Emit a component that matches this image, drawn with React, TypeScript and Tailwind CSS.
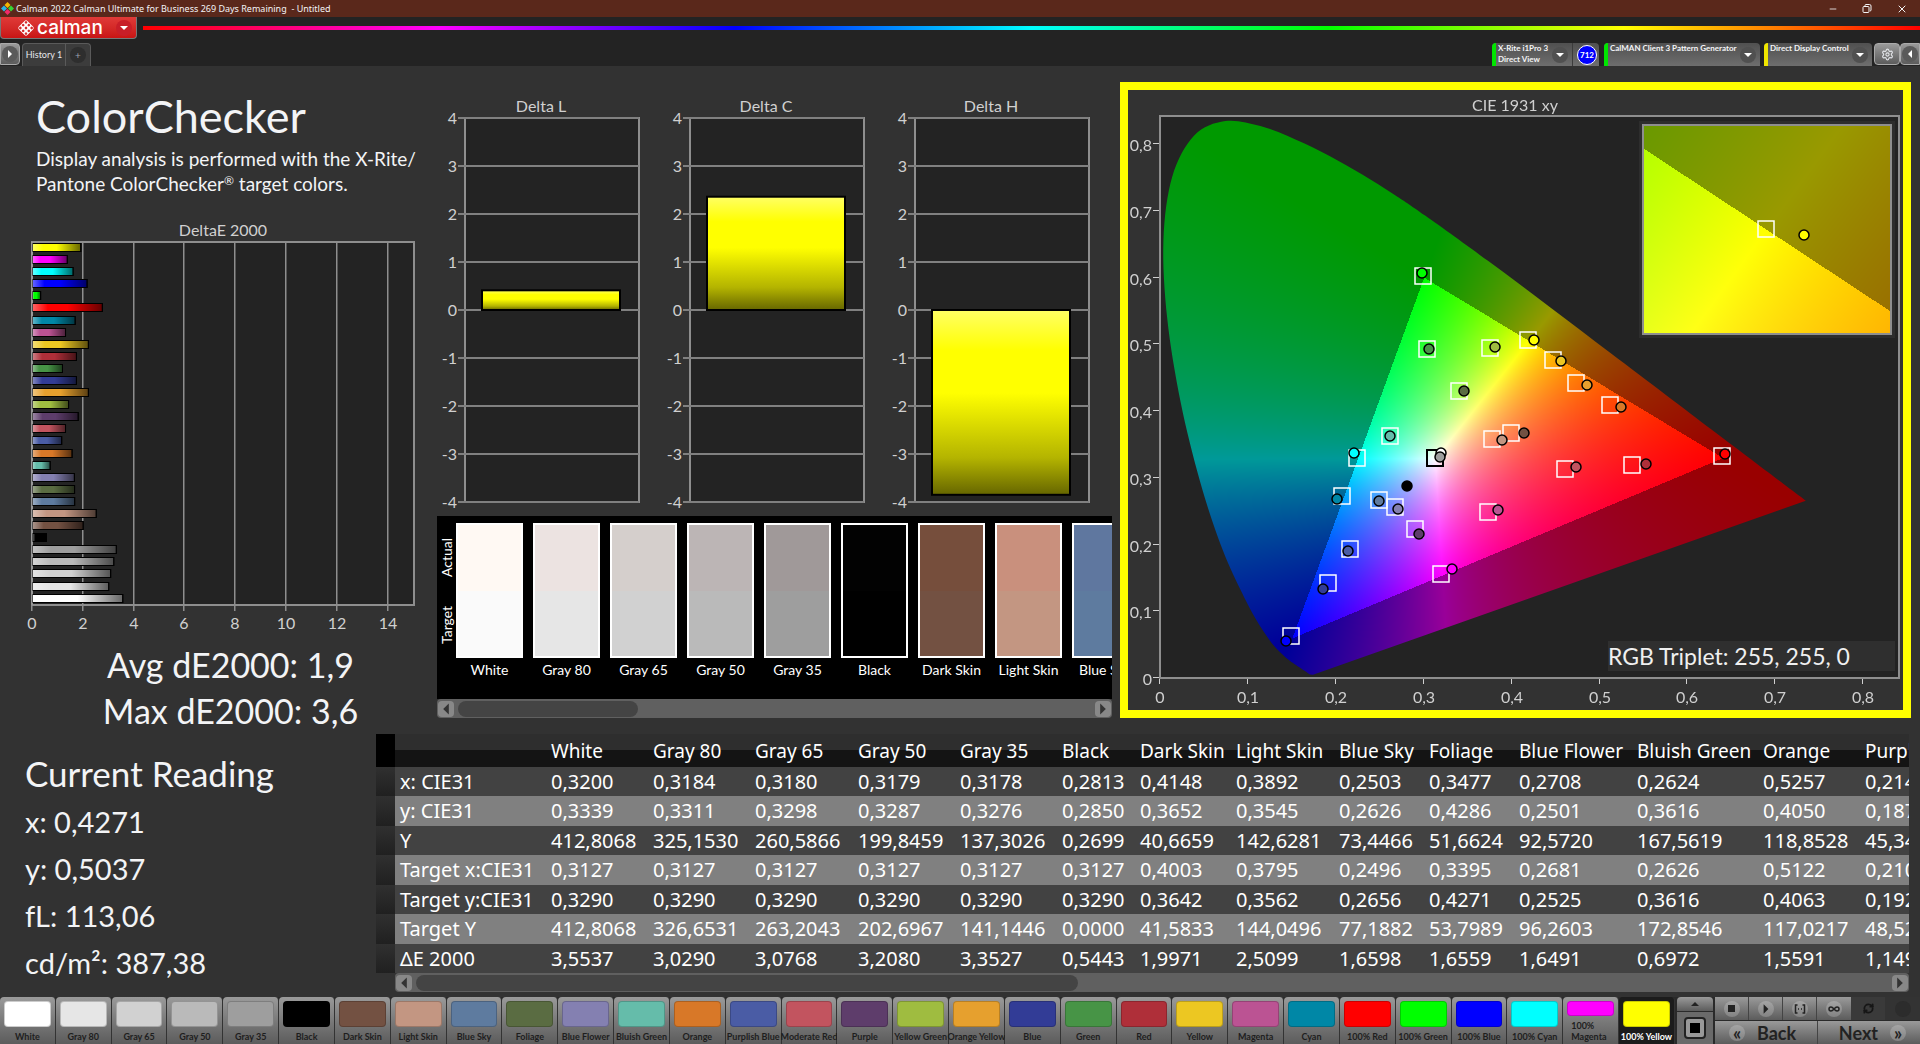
import React, { useEffect, useRef } from 'react';
import { Infinity as InfinityIcon, Minus, RefreshCw, Settings, X } from 'lucide-react';

interface Patch {
  name: string;
  target: string;
  actual?: string;
  dE: number;
}

interface Marker {
  x: number;
  y: number;
  fill: string;
}

const patches: Patch[] = [
  { name: 'White', target: '#ffffff', actual: '#fff9f3', dE: 3.5537 },
  { name: 'Gray 80', target: '#e6e6e6', actual: '#ece3e1', dE: 3.0 },
  { name: 'Gray 65', target: '#d1d1d1', actual: '#d5cfcc', dE: 3.0768 },
  { name: 'Gray 50', target: '#bababa', actual: '#bcb5b5', dE: 3.2 },
  { name: 'Gray 35', target: '#9e9e9e', actual: '#a09999', dE: 3.3 },
  { name: 'Black', target: '#000000', actual: '#020202', dE: 0.5443 },
  { name: 'Dark Skin', target: '#735142', actual: '#764e3c', dE: 1.9971 },
  { name: 'Light Skin', target: '#c39682', actual: '#c9907d', dE: 2.5099 },
  { name: 'Blue Sky', target: '#5e7b9f', actual: '#5f779f', dE: 1.6598 },
  { name: 'Foliage', target: '#5a6c42', dE: 1.6559 },
  { name: 'Blue Flower', target: '#8480b1', dE: 1.6491 },
  { name: 'Bluish Green', target: '#65bcaa', dE: 0.6972 },
  { name: 'Orange', target: '#d87828', dE: 1.5591 },
  { name: 'Purplish Blue', target: '#4a5ca5', dE: 1.149 },
  { name: 'Moderate Red', target: '#c2545f', dE: 1.3 },
  { name: 'Purple', target: '#5e3d6b', dE: 1.8 },
  { name: 'Yellow Green', target: '#9fbc40', dE: 1.42 },
  { name: 'Orange Yellow', target: '#e6a02e', dE: 2.2 },
  { name: 'Blue', target: '#323c96', dE: 1.73 },
  { name: 'Green', target: '#479446', dE: 1.18 },
  { name: 'Red', target: '#af2f39', dE: 1.73 },
  { name: 'Yellow', target: '#ecc722', dE: 2.2 },
  { name: 'Magenta', target: '#bb5393', dE: 1.3 },
  { name: 'Cyan', target: '#0087a6', dE: 1.68 },
  { name: '100% Red', target: '#ff0000', dE: 2.75 },
  { name: '100% Green', target: '#00ff00', dE: 0.32 },
  { name: '100% Blue', target: '#0000ff', dE: 2.15 },
  { name: '100% Cyan', target: '#00ffff', dE: 1.6 },
  { name: '100% Magenta', target: '#ff00ff', dE: 1.37 },
  { name: '100% Yellow', target: '#ffff00', dE: 1.9 },
];

const rows: { label: string; values: string[] }[] = [
  { label: 'x: CIE31', values: ['0,3200', '0,3184', '0,3180', '0,3179', '0,3178', '0,2813', '0,4148', '0,3892', '0,2503', '0,3477', '0,2708', '0,2624', '0,5257', '0,2142'] },
  { label: 'y: CIE31', values: ['0,3339', '0,3311', '0,3298', '0,3287', '0,3276', '0,2850', '0,3652', '0,3545', '0,2626', '0,4286', '0,2501', '0,3616', '0,4050', '0,1877'] },
  { label: 'Y', values: ['412,8068', '325,1530', '260,5866', '199,8459', '137,3026', '0,2699', '40,6659', '142,6281', '73,4466', '51,6624', '92,5720', '167,5619', '118,8528', '45,3442'] },
  { label: 'Target x:CIE31', values: ['0,3127', '0,3127', '0,3127', '0,3127', '0,3127', '0,3127', '0,4003', '0,3795', '0,2496', '0,3395', '0,2681', '0,2626', '0,5122', '0,2106'] },
  { label: 'Target y:CIE31', values: ['0,3290', '0,3290', '0,3290', '0,3290', '0,3290', '0,3290', '0,3642', '0,3562', '0,2656', '0,4271', '0,2525', '0,3616', '0,4063', '0,1922'] },
  { label: 'Target Y', values: ['412,8068', '326,6531', '263,2043', '202,6967', '141,1446', '0,0000', '41,5833', '144,0496', '77,1882', '53,7989', '96,2603', '172,8546', '117,0217', '48,5231'] },
  { label: 'ΔE 2000', values: ['3,5537', '3,0290', '3,0768', '3,2080', '3,3527', '0,5443', '1,9971', '2,5099', '1,6598', '1,6559', '1,6491', '0,6972', '1,5591', '1,1492'] },
];

const columnWidths = [19, 151, 102, 102, 103, 102, 102, 78, 96, 103, 90, 90, 118, 126, 102, 140];

// CIE 1931 spectral locus
const locus: [number, number][] = [
  [0.1741, 0.005], [0.1714, 0.0051], [0.1689, 0.0069], [0.1644, 0.0109], [0.1566, 0.0177], [0.151, 0.0227],
  [0.144, 0.0297], [0.1355, 0.0399], [0.1241, 0.0578], [0.1096, 0.0868], [0.0913, 0.1327], [0.0687, 0.2007],
  [0.0454, 0.295], [0.0235, 0.4127], [0.0082, 0.5384], [0.0039, 0.6548], [0.0139, 0.7502], [0.0389, 0.812],
  [0.0743, 0.8338], [0.1142, 0.8262], [0.1547, 0.8059], [0.1929, 0.7816], [0.2296, 0.7543], [0.2658, 0.7243],
  [0.3016, 0.6923], [0.3731, 0.6245], [0.4441, 0.5547], [0.5125, 0.4866], [0.5752, 0.4242], [0.627, 0.3725],
  [0.6658, 0.334], [0.6915, 0.3083], [0.719, 0.2809], [0.7347, 0.2653],
];

const targets: [number, number][] = [
  [263, 160], [267, 233], [330, 232], [299, 275], [230, 320], [197, 342], [182, 380], [219, 384], [235, 391],
  [255, 413], [190, 433], [168, 467], [131, 520], [281, 458], [328, 396], [332, 323], [351, 317], [368, 224],
  [393, 244], [416, 267], [450, 289], [405, 353], [472, 349], [562, 340],
];

const measured: Marker[] = [
  { x: 262, y: 157, fill: '#00ff00' }, { x: 269, y: 233, fill: '#479446' }, { x: 335, y: 231, fill: '#9fbc40' },
  { x: 304, y: 275, fill: '#5a6c42' }, { x: 230, y: 320, fill: '#65bcaa' }, { x: 194, y: 337, fill: '#00ffff' },
  { x: 177, y: 383, fill: '#0087a6' }, { x: 219, y: 385, fill: '#5e7b9f' }, { x: 238, y: 393, fill: '#8480b1' },
  { x: 259, y: 418, fill: '#5e3d6b' }, { x: 188, y: 435, fill: '#4a5ca5' }, { x: 163, y: 473, fill: '#323c96' },
  { x: 126, y: 525, fill: '#0000ff' }, { x: 292, y: 453, fill: '#ff00ff' }, { x: 338, y: 394, fill: '#bb5393' },
  { x: 342, y: 324, fill: '#c39682' }, { x: 281, y: 337, fill: '#ffffff' }, { x: 280, y: 341, fill: '#9e9e9e' },
  { x: 247, y: 370, fill: '#000000' }, { x: 374, y: 224, fill: '#ffff00' }, { x: 401, y: 245, fill: '#ecc722' },
  { x: 427, y: 269, fill: '#e6a02e' }, { x: 461, y: 291, fill: '#d87828' }, { x: 364, y: 317, fill: '#735142' },
  { x: 416, y: 351, fill: '#c2545f' }, { x: 486, y: 348, fill: '#af2f39' }, { x: 565, y: 338, fill: '#ff0000' },
];

const PLOT = { left: 32, top: 26, right: 771, bottom: 588, sx: 879, sy: 668 };
const INSET = { left: 515, top: 35, width: 248, height: 209 };

function chromaticity(x: number, y: number): [number, number, number] {
  const X = x / y;
  const Z = (1 - x - y) / y;
  const r = 3.2406 * X - 1.5372 - 0.4986 * Z;
  const g = -0.9689 * X + 1.8758 + 0.0415 * Z;
  const b = 0.0557 * X - 0.204 + 1.057 * Z;
  const inGamut = Math.min(r, g, b) >= 0;
  const k = (inGamut ? 255 : 153) / Math.max(r, g, b);
  return [Math.max(r, 0) * k, Math.max(g, 0) * k, Math.max(b, 0) * k];
}

function paintArea(w: number, h: number, toXY: (px: number, py: number) => [number, number]) {
  const layer = document.createElement('canvas');
  layer.width = w;
  layer.height = h;
  const ctx = layer.getContext('2d')!;
  const img = ctx.createImageData(w, h);
  for (let j = 0; j < h; j++) {
    for (let i = 0; i < w; i++) {
      const [x, y] = toXY(i, j);
      const [r, g, b] = chromaticity(x, Math.max(y, 0.001));
      const o = (j * w + i) * 4;
      img.data[o] = r;
      img.data[o + 1] = g;
      img.data[o + 2] = b;
      img.data[o + 3] = 255;
    }
  }
  ctx.putImageData(img, 0, 0);
  return layer;
}

const RAISED = 'bg-linear-to-b from-[#9a9a9a] to-[#5c5c5c]';

const CalmanLogo: React.FC = () => (
  <svg width="18" height="18" viewBox="0 0 18 18" aria-hidden="true">
    <g transform="rotate(45 9 9)">
      <rect x="3" y="3" width="12" height="12" rx="2" fill="#fff" />
      {[5, 9, 13].map(cx => [5, 9, 13].map(cy => (
        <circle key={`${cx}-${cy}`} cx={cx} cy={cy} r="1.3" fill="#d42a2a" />
      )))}
    </g>
  </svg>
);

const AppIcon: React.FC = () => (
  <svg width="13" height="13" viewBox="0 0 13 13" aria-hidden="true">
    <path d="M6.500 0 9.500 3 6.500 6 3.500 3z" fill="#f4b400" />
    <path d="M3 3.500 6 6.500 3 9.500 0 6.500z" fill="#28b4e8" />
    <path d="M10 3.500 13 6.500 10 9.500 7 6.500z" fill="#35d435" />
    <path d="M6.500 7 9.500 10 6.500 13 3.500 10z" fill="#f02a6a" />
  </svg>
);

const Triangle: React.FC<{ dir: 'down' | 'up' | 'left' | 'right'; color?: string; size?: number }> = ({ dir, color = '#fff', size = 10 }) => {
  const d = {
    down: 'M1 3h8L5 7z',
    up: 'M1 7h8L5 3z',
    left: 'M7 1v8L3 5z',
    right: 'M3 1v8l4-4z',
  }[dir];
  return (
    <svg width={size} height={size} viewBox="0 0 10 10" aria-hidden="true">
      <path d={d} fill={color} />
    </svg>
  );
};

const TitleBar: React.FC = () => (
  <header className="flex h-[17px] items-center bg-[#5a281b] pl-px text-[9px] text-gray-100 font-['Noto_Sans',sans-serif]">
    <AppIcon />
    <span className="ml-0.5 whitespace-pre">Calman 2022 Calman Ultimate for Business 269 Days Remaining  - Untitled</span>
    <div className="ml-auto flex items-center gap-6 pr-3">
      <button aria-label="Minimize"><Minus size={10} strokeWidth={2} /></button>
      <button aria-label="Restore">
        <svg width="10" height="10" viewBox="0 0 10 10" fill="none" stroke="currentColor" aria-hidden="true">
          <rect x="1" y="2.500" width="6" height="6" rx="1" />
          <path d="M3 2V1.500a1 1 0 0 1 1-1h3.500a1.500 1.500 0 0 1 1.500 1.500V6a1 1 0 0 1-1 1" />
        </svg>
      </button>
      <button aria-label="Close"><X size={12} strokeWidth={2} /></button>
    </div>
  </header>
);

const SourceTab: React.FC<{ lines: string[]; status: string; badge?: string; width: string }> = ({ lines, status, badge, width }) => (
  <div className={`flex h-[23px] overflow-hidden rounded-t bg-linear-to-b from-[#505050] to-[#6e6e6e] ${width}`}>
    <div className={`w-1 shrink-0 ${status}`} />
    <div className="min-w-0 flex-1 whitespace-nowrap pl-0.5 text-[8px] leading-[11px] font-bold text-gray-100">
      {lines.map(line => <div key={line}>{line}</div>)}
    </div>
    <button aria-label={`${lines[0]} options`} className="mr-1 flex size-4 shrink-0 items-center justify-center self-center rounded-full bg-[#505050]">
      <Triangle dir="down" />
    </button>
    {badge && (
      <div className="flex shrink-0 items-center border-l border-[#3c3c3c] pr-0.5 pl-1">
        <span className="flex size-5 items-center justify-center rounded-full border border-white bg-[#0000ff] text-[8px] font-bold text-white">{badge}</span>
      </div>
    )}
  </div>
);

const Toolbar: React.FC = () => (
  <div className="bg-[#232323]">
    <div className="flex h-[26px] items-start">
      <button className="flex h-[22px] w-[137px] items-center rounded-b border border-[#777] border-t-0 bg-linear-to-b from-[#e03a38] to-[#c91414] pl-4 text-white">
        <CalmanLogo />
        <span className="ml-0.5 flex-1 text-left text-[19px] leading-5 font-medium font-['Inter',sans-serif]">calman</span>
        <span className="mr-1 flex size-4 items-center justify-center rounded-full bg-[#c81e28]"><Triangle dir="down" /></span>
      </button>
      <div className="mt-[9px] ml-1.5 h-1 flex-1 bg-[linear-gradient(90deg,#f00,#f0f,#00f,#0ff,#0f0,#ff0,#f00)]" />
    </div>
    <div className="flex h-[23px] items-start">
      <button aria-label="Show panel" className={`flex h-[22px] w-5 items-center justify-center rounded-r border border-[#aaa] ${RAISED}`}>
        <span className="flex size-4 items-center justify-center rounded-full bg-[#5a5a5a]"><Triangle dir="right" /></span>
      </button>
      <div className="ml-0.5 flex h-[23px] w-[69px] rounded-t border border-b-0 border-[#5a5a5a] bg-[#3c3c3c]">
        <button className="w-[43px] border-r border-[#5a5a5a] text-[9px] whitespace-nowrap text-gray-200">History 1</button>
        <button aria-label="Add history" className="m-auto size-4 rounded-full bg-[#2e2e2e] text-[10px] leading-4 text-gray-400">+</button>
      </div>
      <div className="ml-auto flex">
        <SourceTab lines={['X-Rite i1Pro 3', 'Direct View']} status="bg-[#00e600]" badge="712" width="w-[107px] mr-[5px]" />
        <SourceTab lines={['CalMAN Client 3 Pattern Generator']} status="bg-[#00e600]" width="w-[156px] mr-1" />
        <SourceTab lines={['Direct Display Control']} status="bg-[#f0e600]" width="w-[108px] mr-0.5" />
        <button aria-label="Settings" className={`flex h-[22px] w-[26px] items-center justify-center rounded border border-[#aaa] text-gray-200 ${RAISED}`}>
          <Settings size={13} />
        </button>
        <button aria-label="Hide panel" className={`flex h-[22px] w-5 items-center justify-center rounded-l border border-[#aaa] ${RAISED}`}>
          <span className="flex size-4 items-center justify-center rounded-full bg-[#5a5a5a]"><Triangle dir="left" /></span>
        </button>
      </div>
    </div>
  </div>
);

const DeltaEChart: React.FC = () => (
  <svg viewBox="0 0 437 420" className="mt-6 block w-full" role="img" aria-label="DeltaE 2000">
    <defs>
      <linearGradient id="barShade" x1="0" x2="1" y1="0" y2="0">
        <stop offset="0" stopColor="#fff" stopOpacity="0.4" />
        <stop offset="0.22" stopColor="#fff" stopOpacity="0" />
        <stop offset="0.5" stopColor="#000" stopOpacity="0" />
        <stop offset="1" stopColor="#000" stopOpacity="0.6" />
      </linearGradient>
    </defs>
    <text x="223" y="16" textAnchor="middle" fontSize="16" fill="#d0d0d0">DeltaE 2000</text>
    <rect x="32" y="22" width="382" height="363" fill="#232323" stroke="#8e8e8e" strokeWidth="2" />
    {[0, 2, 4, 6, 8, 10, 12, 14].map(v => (
      <g key={v}>
        <rect x={Math.round(32 + v * 25.4) - 1} y="22" width="1.5" height="369" fill="#8e8e8e" />
        <text x={Math.round(32 + v * 25.4)} y="409" textAnchor="middle" fontSize="16" fill="#d0d0d0">{v}</text>
      </g>
    ))}
    {[...patches].reverse().map((p, i) => {
      const y = Math.round(23 + i * 12.09);
      const w = p.dE * 25.4;
      return (
        <g key={p.name} stroke="#000">
          <rect x="32.500" y={y + 0.5} width={w} height="8" fill={p.target} />
          <rect x="32.500" y={y + 0.5} width={w} height="8" fill="url(#barShade)" />
        </g>
      );
    })}
    <rect x="31.500" y="22" width="1" height="363" fill="#a0a0a0" />
  </svg>
);

const DeltaChart: React.FC<{ title: string; value: number }> = ({ title, value }) => {
  const top = value > 0 ? 220 - value * 48 : 220;
  return (
    <svg viewBox="0 0 225 426" className="block w-full" role="img" aria-label={title}>
      <defs>
        <linearGradient id="yellowBar" x1="0" x2="0" y1="0" y2="1">
          <stop offset="0" stopColor="#ffff64" />
          <stop offset="0.22" stopColor="#ffff00" />
          <stop offset="0.45" stopColor="#ffff00" />
          <stop offset="0.8" stopColor="#b4b400" />
          <stop offset="1" stopColor="#666600" />
        </linearGradient>
      </defs>
      <text x="104" y="22" textAnchor="middle" fontSize="16" fill="#d0d0d0">{title}</text>
      <rect x="28" y="28" width="174" height="384" fill="#232323" stroke="#8e8e8e" strokeWidth="2" />
      {[4, 3, 2, 1, 0, -1, -2, -3, -4].map(v => (
        <g key={v}>
          <rect x="21" y={219 - v * 48} width="181" height="2" fill="#808080" />
          <text x="20" y={226 - v * 48} textAnchor="end" fontSize="16" fill="#d0d0d0">{v}</text>
        </g>
      ))}
      <rect x="45" y={top} width="138" height={Math.abs(value) * 48} fill="url(#yellowBar)" stroke="#000" strokeWidth="2" />
    </svg>
  );
};

const Scrollbar: React.FC<{ thumb: string }> = ({ thumb }) => (
  <div className="flex h-[19px] items-center rounded-sm bg-[#606060] px-px">
    <button aria-label="Scroll left" className="flex h-4 w-4 items-center justify-center rounded bg-[#888]"><Triangle dir="left" color="#333" size={14} /></button>
    <div className={`ml-1 h-4 rounded-lg bg-[#444] ${thumb}`} />
    <button aria-label="Scroll right" className="ml-auto flex h-4 w-4 items-center justify-center rounded bg-[#888]"><Triangle dir="right" color="#333" size={14} /></button>
  </div>
);

const SwatchStrip: React.FC = () => (
  <div>
    <div className="flex h-[183px] overflow-hidden bg-black pt-[7px] text-white">
      <div className="flex h-[135px] w-[19px] shrink-0 rotate-180 flex-row items-center justify-around text-[14px] leading-[18px] [writing-mode:vertical-rl]">
        <span>Target</span>
        <span>Actual</span>
      </div>
      <div className="flex min-w-0 flex-1 gap-[10px] overflow-hidden">
        {patches.slice(0, 9).map(p => (
          <div key={p.name} className="w-[67px] shrink-0">
            <div className="flex h-[135px] flex-col border-2 border-white">
              <div className="flex-1" style={{ backgroundColor: p.actual }} />
              <div className="flex-1" style={{ backgroundColor: p.name === 'White' ? '#fafafa' : p.target }} />
            </div>
            <div className="mt-0.5 text-center text-[14px] leading-5 whitespace-nowrap">{p.name}</div>
          </div>
        ))}
      </div>
    </div>
    <Scrollbar thumb="w-[180px]" />
  </div>
);

const CieChart: React.FC = () => {
  const ref = useRef<HTMLCanvasElement>(null);

  useEffect(() => {
    const ctx = ref.current!.getContext('2d')!;
    const w = PLOT.right - PLOT.left;
    const h = PLOT.bottom - PLOT.top;
    ctx.fillStyle = '#232323';
    ctx.fillRect(PLOT.left, PLOT.top, w, h);

    const pts = locus.map(([x, y]) => [PLOT.left + x * PLOT.sx, PLOT.bottom - y * PLOT.sy]);
    ctx.save();
    ctx.beginPath();
    ctx.moveTo(pts[0][0], pts[0][1]);
    for (let i = 0; i < pts.length - 1; i++) {
      const p0 = pts[Math.max(i - 1, 0)];
      const p1 = pts[i];
      const p2 = pts[i + 1];
      const p3 = pts[Math.min(i + 2, pts.length - 1)];
      ctx.bezierCurveTo(
        p1[0] + (p2[0] - p0[0]) / 6, p1[1] + (p2[1] - p0[1]) / 6,
        p2[0] - (p3[0] - p1[0]) / 6, p2[1] - (p3[1] - p1[1]) / 6,
        p2[0], p2[1],
      );
    }
    ctx.closePath();
    ctx.clip();
    ctx.drawImage(paintArea(w, h, (i, j) => [i / PLOT.sx, (h - j) / PLOT.sy]), PLOT.left, PLOT.top);
    ctx.restore();

    // Magnified view around the current patch
    ctx.fillStyle = '#2d2d2d';
    ctx.fillRect(INSET.left - 4, INSET.top - 4, INSET.width + 8, INSET.height + 8);
    const zoom = paintArea(INSET.width, INSET.height, (i, j) => [
      0.4193 + (i - 123) / 4936,
      0.5053 - (j - 104) / 4100,
    ]);
    ctx.drawImage(zoom, INSET.left, INSET.top);
  }, []);

  return (
    <section className="relative border-8 border-[#ffff00]">
      <canvas ref={ref} width={775} height={620} className="block w-full" />
      <svg viewBox="0 0 775 620" className="absolute inset-0 w-full" role="img" aria-label="CIE 1931 xy">
        <g fill="#d0d0d0" fontSize="16">
          <text x="387" y="21" textAnchor="middle" fontSize="16">CIE 1931 xy</text>
          {[0, 1, 2, 3, 4, 5, 6, 7, 8].map(v => {
            const x = Math.round(PLOT.left + v * 87.9);
            const y = Math.round(PLOT.bottom - v * 66.75);
            const label = v === 0 ? '0' : `0,${v}`;
            return (
              <g key={v}>
                <rect x={x - 1} y={PLOT.bottom} width="1" height="6" />
                <text x={x} y="613" textAnchor="middle">{label}</text>
                <rect x="25" y={y - 1} width="7" height="1" />
                <text x="24" y={y + 7} textAnchor="end">{label}</text>
              </g>
            );
          })}
        </g>
        <rect x="32" y="26" width="739" height="562" fill="none" stroke="#8e8e8e" strokeWidth="2" />
        <rect x={INSET.left} y={INSET.top} width={INSET.width} height={INSET.height} fill="none" stroke="#8e8e8e" strokeWidth="2" />
        <g transform="translate(32 26)" strokeWidth="1.500">
          {targets.map(([x, y]) => (
            <rect key={`${x}-${y}`} x={x - 8} y={y - 8} width="16" height="16" fill="none" stroke="#fff" />
          ))}
          <rect x="267" y="334" width="16" height="16" fill="none" stroke="#000" strokeWidth="2" />
          {measured.map(m => (
            <circle key={m.fill} cx={m.x} cy={m.y} r="5" fill={m.fill} stroke="#000" />
          ))}
          <rect x="598" y="105" width="16" height="16" fill="none" stroke="#fff" />
          <circle cx="644" cy="119" r="5" fill="#ffff00" stroke="#000" />
        </g>
        <rect x="480" y="551" width="287" height="30" fill="#2f2f2f" />
        <text x="480" y="575" fontSize="23" fill="#f0f0f0">RGB Triplet: 255, 255, 0</text>
      </svg>
    </section>
  );
};

const DataTable: React.FC = () => (
  <div className="mr-[11px] min-w-0 flex-1">
    <div className="overflow-hidden">
      <table className="w-[1624px] table-fixed border-collapse text-left whitespace-nowrap text-white font-['Noto_Sans',sans-serif]">
        <colgroup>
          {columnWidths.map((w, i) => <col key={i} style={{ width: w }} />)}
        </colgroup>
        <thead>
          <tr className="h-[33px] bg-[linear-gradient(#2e2e2e_0_50%,#141414_50%)] text-[19px] leading-6">
            <td className="bg-black" />
            <td />
            {patches.slice(0, 14).map(p => <th key={p.name} scope="col" className="p-0 pl-[5px] font-normal">{p.name}</th>)}
          </tr>
        </thead>
        <tbody>
          {rows.map(row => (
            <tr key={row.label} className="h-[29px] bg-[#424242] text-[20px] leading-6 even:h-[30px] even:bg-[#808080]">
              <td className="bg-linear-to-b from-[#303030] to-[#202020]" />
              <th scope="row" className="p-0 pl-[5px] font-normal">{row.label}</th>
              {row.values.map((v, i) => <td key={i} className="p-0 pl-[5px]">{v}</td>)}
            </tr>
          ))}
        </tbody>
      </table>
    </div>
    <div className="ml-[19px]">
      <Scrollbar thumb="w-[662px]" />
    </div>
  </div>
);

const PatchButton: React.FC<{ patch: Patch; active: boolean }> = ({ patch, active }) => (
  <button
    className={`flex min-w-0 flex-1 flex-col items-center rounded-t border-r border-[#333] px-1 pt-1 pb-0.5 text-[9px] leading-[11px] font-bold ${
      active ? 'bg-[#1c1c1c] text-white' : `text-[#1e1e1e] ${RAISED}`
    }`}
  >
    <span className="min-h-0 w-full flex-1 rounded-sm border border-black/20" style={{ backgroundColor: patch.target }} />
    <span className={patch.name === '100% Magenta' ? 'mt-1 w-full px-1 text-left' : 'mt-1 whitespace-nowrap'}>{patch.name}</span>
  </button>
);

const RoundIcon: React.FC<{ children?: React.ReactNode }> = ({ children }) => (
  <span className="flex size-4 items-center justify-center rounded-full bg-white/20">{children}</span>
);

const Transport: React.FC = () => (
  <div className="ml-0.5 flex w-[243px] gap-0.5 text-[#222]">
    <div className="flex w-9 flex-col gap-px">
      <button aria-label="Expand" className={`flex h-3.5 items-center justify-center rounded-t ${RAISED}`}><Triangle dir="up" color="#222" /></button>
      <button aria-label="Pattern window" className="flex flex-1 items-center justify-center bg-[#6a6a6a]">
        <span className="flex size-[22px] items-center justify-center rounded-sm border-2 border-[#222] bg-[#999]"><span className="size-2.5 bg-black" /></span>
      </button>
    </div>
    <div className="flex flex-1 flex-col gap-px">
      <div className="flex h-[23px]">
        <button aria-label="Stop" className={`flex w-[34px] items-center justify-center border-r border-[#444] ${RAISED}`}><RoundIcon><span className="size-[7px] bg-[#222]" /></RoundIcon></button>
        <button aria-label="Play" className={`flex w-[34px] items-center justify-center border-r border-[#444] ${RAISED}`}><RoundIcon><Triangle dir="right" color="#222" size={12} /></RoundIcon></button>
        <button aria-label="Read series" className={`flex w-[34px] items-center justify-center border-r border-[#444] ${RAISED}`}>
          <RoundIcon>
            <svg width="12" height="10" viewBox="0 0 12 10" fill="none" stroke="#222" strokeWidth="1.500" aria-hidden="true">
              <path d="M3.500 1H1.500v8h2M8.500 1h2v8h-2M4 5h1M7 5h1" />
            </svg>
          </RoundIcon>
        </button>
        <button aria-label="Continuous" className={`flex w-[34px] items-center justify-center ${RAISED}`}><RoundIcon><InfinityIcon size={12} strokeWidth={3} /></RoundIcon></button>
        <button aria-label="Refresh" className="flex w-[34px] items-center justify-center bg-[#3a3a3a] text-[#161616]"><RefreshCw size={11} strokeWidth={4} /></button>
        <div className="flex flex-1 items-center justify-center bg-[#333]"><span className="size-4 rounded-full bg-[#2c2c2c]" /></div>
      </div>
      <div className="flex flex-1 text-[18px] leading-5 font-bold">
        <button className={`flex flex-1 items-center gap-3 border-r border-[#444] pl-3.5 ${RAISED}`}><RoundIcon>«</RoundIcon>Back</button>
        <button className={`flex flex-1 items-center justify-end gap-3 pr-3.5 ${RAISED}`}>Next<RoundIcon>»</RoundIcon></button>
      </div>
    </div>
  </div>
);

const App: React.FC = () => {
  return (
    <div className="flex min-h-screen flex-col overflow-hidden bg-[#323232] font-['Lato',sans-serif]">
      <TitleBar />
      <Toolbar />

      <main className="flex-1 pt-4">
        <div className="grid grid-cols-[minmax(0,437fr)_minmax(0,683fr)_minmax(0,800fr)] items-start">
          <section>
            <div className="pt-[6px] pl-9 text-gray-100">
              <h1 className="text-[45px] leading-[56px]">ColorChecker</h1>
              <p className="mt-0.5 text-[19px] leading-[25px]">
                Display analysis is performed with the X-Rite/<br />Pantone ColorChecker<sup className="text-[12px]">®</sup> target colors.
              </p>
            </div>
            <DeltaEChart />
            <div className="mt-0.5 pl-6 text-center text-[34px] leading-[46px] text-gray-100">
              <p>Avg dE2000: 1,9</p>
              <p>Max dE2000: 3,6</p>
            </div>
          </section>

          <section className="pt-2 pr-2">
            <div className="grid grid-cols-3">
              <DeltaChart title="Delta L" value={0.41} />
              <DeltaChart title="Delta C" value={2.36} />
              <DeltaChart title="Delta H" value={-3.85} />
            </div>
            <SwatchStrip />
          </section>

          <div className="pr-[9px]">
            <CieChart />
          </div>
        </div>

        <div className="flex">
          <section className="w-[376px] shrink-0 pt-4 pl-[25px] text-gray-100">
            <h2 className="mb-0.5 text-[35px] leading-[46px]">Current Reading</h2>
            <div className="text-[29px] leading-[47px]">
              <p>x: 0,4271</p>
              <p>y: 0,5037</p>
              <p>fL: 113,06</p>
              <p>cd/m²: 387,38</p>
            </div>
          </section>
          <DataTable />
        </div>
      </main>

      <footer className="flex h-[47px] bg-[#2a2a2a]">
        <div className="flex min-w-0 flex-1">
          {patches.map(p => <PatchButton key={p.name} patch={p} active={p.name === '100% Yellow'} />)}
        </div>
        <Transport />
      </footer>
    </div>
  );
};

export default App;
